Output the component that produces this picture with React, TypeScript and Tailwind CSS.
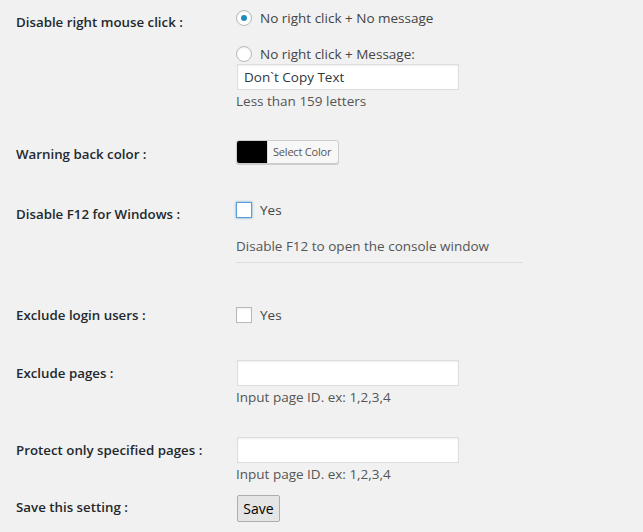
import React from "react"

const font = { fontFamily: '"Open Sans", "Noto Sans", sans-serif' }

function Radio({ checked }: { checked?: boolean }) {
  return (
    <span className="flex h-4 w-4 shrink-0 items-center justify-center rounded-full border border-[#b4b9be] bg-white shadow-[inset_0_1px_2px_rgba(0,0,0,0.07)]">
      {checked && <span className="h-[6px] w-[6px] rounded-full bg-[#1e8cbe]" />}
    </span>
  )
}

function Checkbox({ focused }: { focused?: boolean }) {
  return (
    <span
      className={
        focused
          ? "block h-4 w-4 shrink-0 border border-[#5b9dd9] bg-white shadow-[0_0_2px_rgba(30,140,190,0.8)]"
          : "block h-4 w-4 shrink-0 border border-[#b4b9be] bg-white shadow-[inset_0_1px_2px_rgba(0,0,0,0.07)]"
      }
    />
  )
}

function TextInput({ value }: { value?: string }) {
  return (
    <div className="flex h-[26px] w-[222px] items-center border border-[#ddd] bg-white px-[6px] text-[13.5px] text-[#32373c] shadow-[inset_0_1px_2px_rgba(0,0,0,0.07)]">
      {value}
    </div>
  )
}

function Label({ text, pt }: { text: string; pt: string }) {
  return (
    <div className={`w-[236px] shrink-0 pl-4 text-[13.3px] font-semibold leading-5 text-[#23282d] ${pt}`}>
      {text}
    </div>
  )
}

export default function App() {
  return (
    <div className="min-h-[532px] w-[643px] bg-[#f1f1f1] text-[13.5px] text-[#444]" style={font}>
      {/* disable right click */}
      <div className="flex">
        <Label text="Disable right mouse click :" pt="pt-[12px]" />
        <div className="pt-[8px]">
          <div className="flex h-5 items-center gap-[8px]">
            <Radio checked />
            <span className="leading-5">No right click + No message</span>
          </div>
          <div className="mt-[16px] flex h-5 items-center gap-[8px]">
            <Radio />
            <span className="leading-5">No right click + Message:</span>
          </div>
          <div className="h-[27px] pl-px">
            <TextInput value="Don`t Copy Text" />
          </div>
          <div className="leading-5 text-[#555]">Less than 159 letters</div>
        </div>
      </div>

      {/* warning color */}
      <div className="mt-[29px] flex">
        <Label text="Warning back color :" pt="pt-[4px]" />
        <div className="flex h-6 w-[103px] overflow-hidden rounded-[3px] border border-[#ccc] bg-[#f7f7f7] shadow-[0_1px_0_#ccc]">
          <span className="h-full w-[30px] shrink-0 bg-black" />
          <span className="flex items-center whitespace-nowrap border-l border-[#ddd] px-[5px] text-[11px] tracking-[-0.2px] text-[#555]">
            Select Color
          </span>
        </div>
      </div>

      {/* F12 */}
      <div className="mt-[38px] flex">
        <Label text="Disable F12 for Windows :" pt="pt-[2px]" />
        <div>
          <div className="flex h-4 items-center gap-[8px]">
            <Checkbox focused />
            <span className="-mt-px leading-4">Yes</span>
          </div>
          <div className="mt-[18px] leading-5 text-[#555]">Disable F12 to open the console window</div>
          <div className="mt-[6px] w-[287px] border-t border-[#ddd]" />
        </div>
      </div>

      {/* exclude login users */}
      <div className="mt-[42px] flex">
        <Label text="Exclude login users :" pt="pt-0" />
        <div className="pt-[2px]">
          <div className="flex h-4 items-center gap-[8px]">
            <Checkbox />
            <span className="-mt-px leading-4">Yes</span>
          </div>
        </div>
      </div>

      {/* exclude pages */}
      <div className="mt-[35px] flex">
        <Label text="Exclude pages :" pt="pt-[3px]" />
        <div className="pl-px">
          <TextInput />
          <div className="mt-[1px] -ml-px leading-5 text-[#555]">Input page ID. ex: 1,2,3,4</div>
        </div>
      </div>

      {/* protect only */}
      <div className="mt-[30px] flex">
        <Label text="Protect only specified pages :" pt="pt-[3px]" />
        <div className="pl-px">
          <TextInput />
          <div className="mt-[1px] -ml-px leading-5 text-[#555]">Input page ID. ex: 1,2,3,4</div>
        </div>
      </div>

      {/* save */}
      <div className="mt-[11px] flex pb-[10px]">
        <Label text="Save this setting :" pt="pt-[2px]" />
        <button className="ml-px h-[27px] w-[43px] rounded-[2px] border border-[#adadad] bg-[#e5e5e5] text-[14px] text-black">
          Save
        </button>
      </div>
    </div>
  )
}
